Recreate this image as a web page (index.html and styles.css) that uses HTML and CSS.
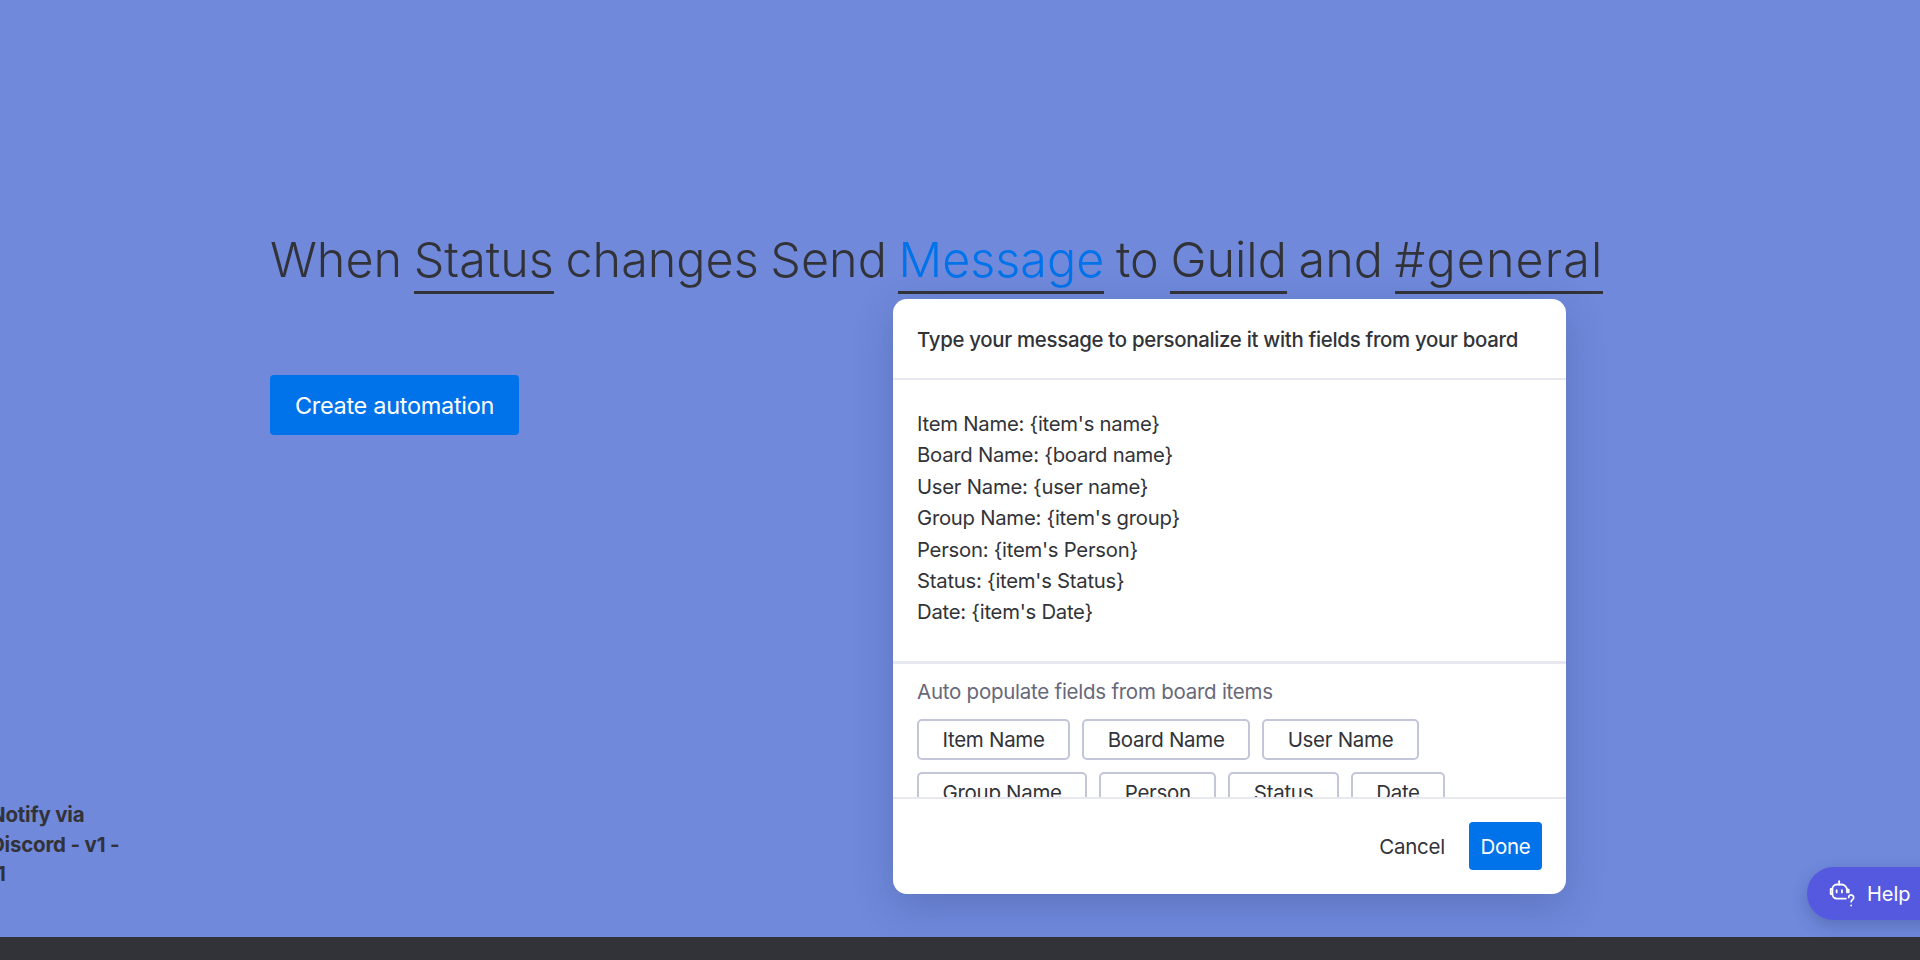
FILE: index.html
```html
<!DOCTYPE html>
<html lang="en">
<head>
<meta charset="utf-8">
<title>Notify via Discord</title>
<link rel="stylesheet" href="styles.css">
</head>
<body>
<main class="stage">
  <h1 class="sentence">When <span class="field">Status</span> changes Send <span class="field field-active">Message</span> to <span class="field">Guild</span> and <span class="field field-channel">#general</span></h1>
  <button class="create-btn">Create automation</button>
  <p class="app-name">Notify via<br>Discord - v1 -<br><span class="app-rev">1</span></p>

  <section class="modal">
    <header class="modal-head">Type your message to personalize it with fields from your board</header>
    <div class="modal-scroll">
      <div class="message">
        <div>Item Name: {item's name}</div>
        <div>Board Name: {board name}</div>
        <div>User Name: {user name}</div>
        <div>Group Name: {item's group}</div>
        <div>Person: {item's Person}</div>
        <div>Status: {item's Status}</div>
        <div>Date: {item's Date}</div>
      </div>
      <div class="populate">
        <div class="populate-label">Auto populate fields from board items</div>
        <div class="chips">
          <button class="chip">Item Name</button>
          <button class="chip">Board Name</button>
          <button class="chip">User Name</button>
          <button class="chip">Group Name</button>
          <button class="chip">Person</button>
          <button class="chip">Status</button>
          <button class="chip">Date</button>
        </div>
      </div>
    </div>
    <footer class="modal-foot">
      <button class="cancel">Cancel</button>
      <button class="done">Done</button>
    </footer>
  </section>

  <div class="help">
    <svg class="help-icon" viewBox="0 0 24 24" width="27" height="27" fill="none" stroke="#fff" stroke-width="1.6" stroke-linecap="round" stroke-linejoin="round">
      <path d="M9 1v3"/>
      <path d="M15 16.500H7a4 4 0 0 1-4-4V8a4 4 0 0 1 4-4h4a5 5 0 0 1 5 5v2"/>
      <path d="M3 8H1.500v4.500H3"/>
      <path d="M16 8.500h1.500V11"/>
      <path d="M6.800 9v2M11.500 9v2"/>
      <path d="M17.500 15.500a2.200 2.200 0 1 1 3.600 1.700c-.9.700-1.400 1.100-1.400 2.100"/>
      <path d="M19.700 22.500v.2"/>
    </svg>
    <span>Help</span>
  </div>
</main>
<div class="bottom-bar"></div>
</body>
</html>
```
FILE: styles.css
```css
* { box-sizing: border-box; }
html, body { margin: 0; height: 960px; overflow: hidden; }
body {
  display: flex;
  flex-direction: column;
  font-family: "Inter", "Liberation Sans", sans-serif;
  color: #323338;
  background: #323338;
}
button { font-family: inherit; cursor: pointer; }

.stage {
  position: relative;
  flex: none;
  height: 937px;
  background: #7089db;
  display: flex;
  flex-direction: column;
  align-items: flex-start;
  overflow: hidden;
  padding: 227px 0 0 270px;
}
.sentence {
  margin: 0;
  font-family: "Inter", sans-serif;
  font-weight: 300;
  font-size: 48.500px;
  line-height: 66px;
  word-spacing: -2px;
  white-space: nowrap;
  color: #323338;
}
.field {
  display: inline-block;
  border-bottom: 3px solid #323338;
  line-height: 62px;
}
.field-active { color: #0073ea; }
.field-channel { letter-spacing: 1.100px; }

.create-btn {
  margin-top: 81px;
  width: 249px;
  height: 60px;
  background: #0073ea;
  color: #fff;
  border: 0;
  border-radius: 4px;
  font-size: 23.500px;
  letter-spacing: -0.3px;
}
.app-name {
  margin: 365px 0 0 -280px;
  font-size: 20.500px;
  line-height: 29.500px;
  font-weight: 700;
  letter-spacing: -0.2px;
}
.app-rev { margin-left: 7px; }

.modal {
  position: absolute;
  left: 893px;
  top: 299px;
  width: 673px;
  height: 595px;
  background: #fff;
  border-radius: 14px;
  box-shadow: 0 12px 40px rgba(29, 40, 90, .22);
  display: flex;
  flex-direction: column;
  overflow: hidden;
}
.modal-head {
  flex: none;
  height: 81px;
  padding: 2px 24px 0;
  display: flex;
  align-items: center;
  border-bottom: 2px solid #e8e9f0;
  font-size: 20.400px;
  font-weight: 500;
  letter-spacing: -0.3px;
  white-space: nowrap;
}
.modal-scroll { flex: 1; overflow: hidden; min-height: 0; }
.message {
  height: 284px;
  padding: 28px 24px 0;
  border-bottom: 3px solid #e8e9f0;
  font-size: 20.300px;
  line-height: 31.400px;
  letter-spacing: -0.25px;
}
.populate { padding: 15px 24px 0; }
.populate-label {
  font-size: 20.500px;
  line-height: 26px;
  letter-spacing: -0.25px;
  color: #676879;
}
.chips { display: flex; flex-wrap: wrap; gap: 12px; margin-top: 14px; }
.chip {
  height: 41px;
  padding: 0 23.500px;
  background: #fff;
  border: 2px solid #c3c6d9;
  border-radius: 5px;
  font-size: 20.500px;
  letter-spacing: -0.3px;
  color: #323338;
}
.modal-foot {
  flex: none;
  height: 97px;
  border-top: 2px solid #e8e9f0;
  padding: 23px 24px 0 0;
  display: flex;
  justify-content: flex-end;
  align-items: flex-start;
}
.cancel {
  height: 48px;
  padding: 0 24px;
  background: none;
  border: 0;
  font-size: 20.500px;
  letter-spacing: -0.25px;
  color: #323338;
}
.done {
  width: 73px;
  height: 48px;
  background: #0073ea;
  color: #fff;
  border: 0;
  border-radius: 4px;
  font-size: 20.500px;
  letter-spacing: -0.25px;
  padding: 0;
}

.help {
  position: absolute;
  left: 1807px;
  top: 867px;
  width: 160px;
  height: 53px;
  border-radius: 27px;
  background: #5559df;
  box-shadow: 0 6px 16px rgba(29, 40, 90, .25);
  color: #fff;
  display: flex;
  align-items: center;
  padding-left: 22px;
  gap: 11px;
  font-size: 20px;
}
.help-icon { flex: none; }

.bottom-bar { flex: none; height: 23px; background: #323338; }
```
